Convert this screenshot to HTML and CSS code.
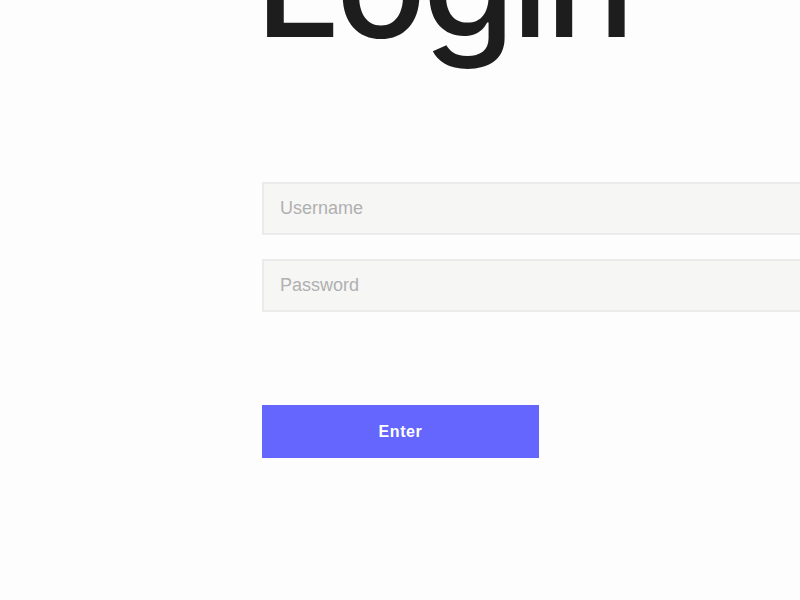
FILE: index.html
```html
<!DOCTYPE html>
<html lang="en">
<head>
<meta charset="utf-8">
<title>Login</title>
<link rel="stylesheet" href="styles.css">
</head>
<body>
<main class="page">
  <h1 class="title">Login</h1>
  <form class="form">
    <input class="field" type="text" placeholder="Username">
    <input class="field" type="password" placeholder="Password">
    <button class="enter" type="button">Enter</button>
  </form>
</main>
</body>
</html>
```
FILE: styles.css
```css
html, body {
  margin: 0;
  padding: 0;
  background: #fdfdfd;
  overflow: hidden;
  width: 800px;
  height: 600px;
}
.page {
  padding-left: 262px;
  width: 700px;
}
.title {
  margin: -92px 0 0 -7px;
  font-family: "Inter", "Liberation Sans", sans-serif;
  font-weight: 550;
  font-size: 150px;
  line-height: 150px;
  letter-spacing: -4px;
  color: #1d1d1d;
  height: 274px;
}
.form {
  display: flex;
  flex-direction: column;
  align-items: flex-start;
}
.field {
  box-sizing: border-box;
  width: 700px;
  height: 53px;
  margin: 0 0 24px 0;
  padding: 0 16px;
  border: 2px solid #ebebeb;
  background: #f6f6f5;
  font-family: "Liberation Sans", Arial, sans-serif;
  font-size: 18px;
  color: #333;
  outline: none;
}
.field::placeholder {
  color: #b0b0b0;
}
.enter {
  margin-top: 69px;
  box-sizing: border-box;
  width: 277px;
  height: 53px;
  border: 0;
  background: #6466fd;
  color: #fff;
  font-family: "Liberation Sans", Arial, sans-serif;
  font-weight: bold;
  font-size: 16px;
  letter-spacing: 0.6px;
  cursor: pointer;
}
```
